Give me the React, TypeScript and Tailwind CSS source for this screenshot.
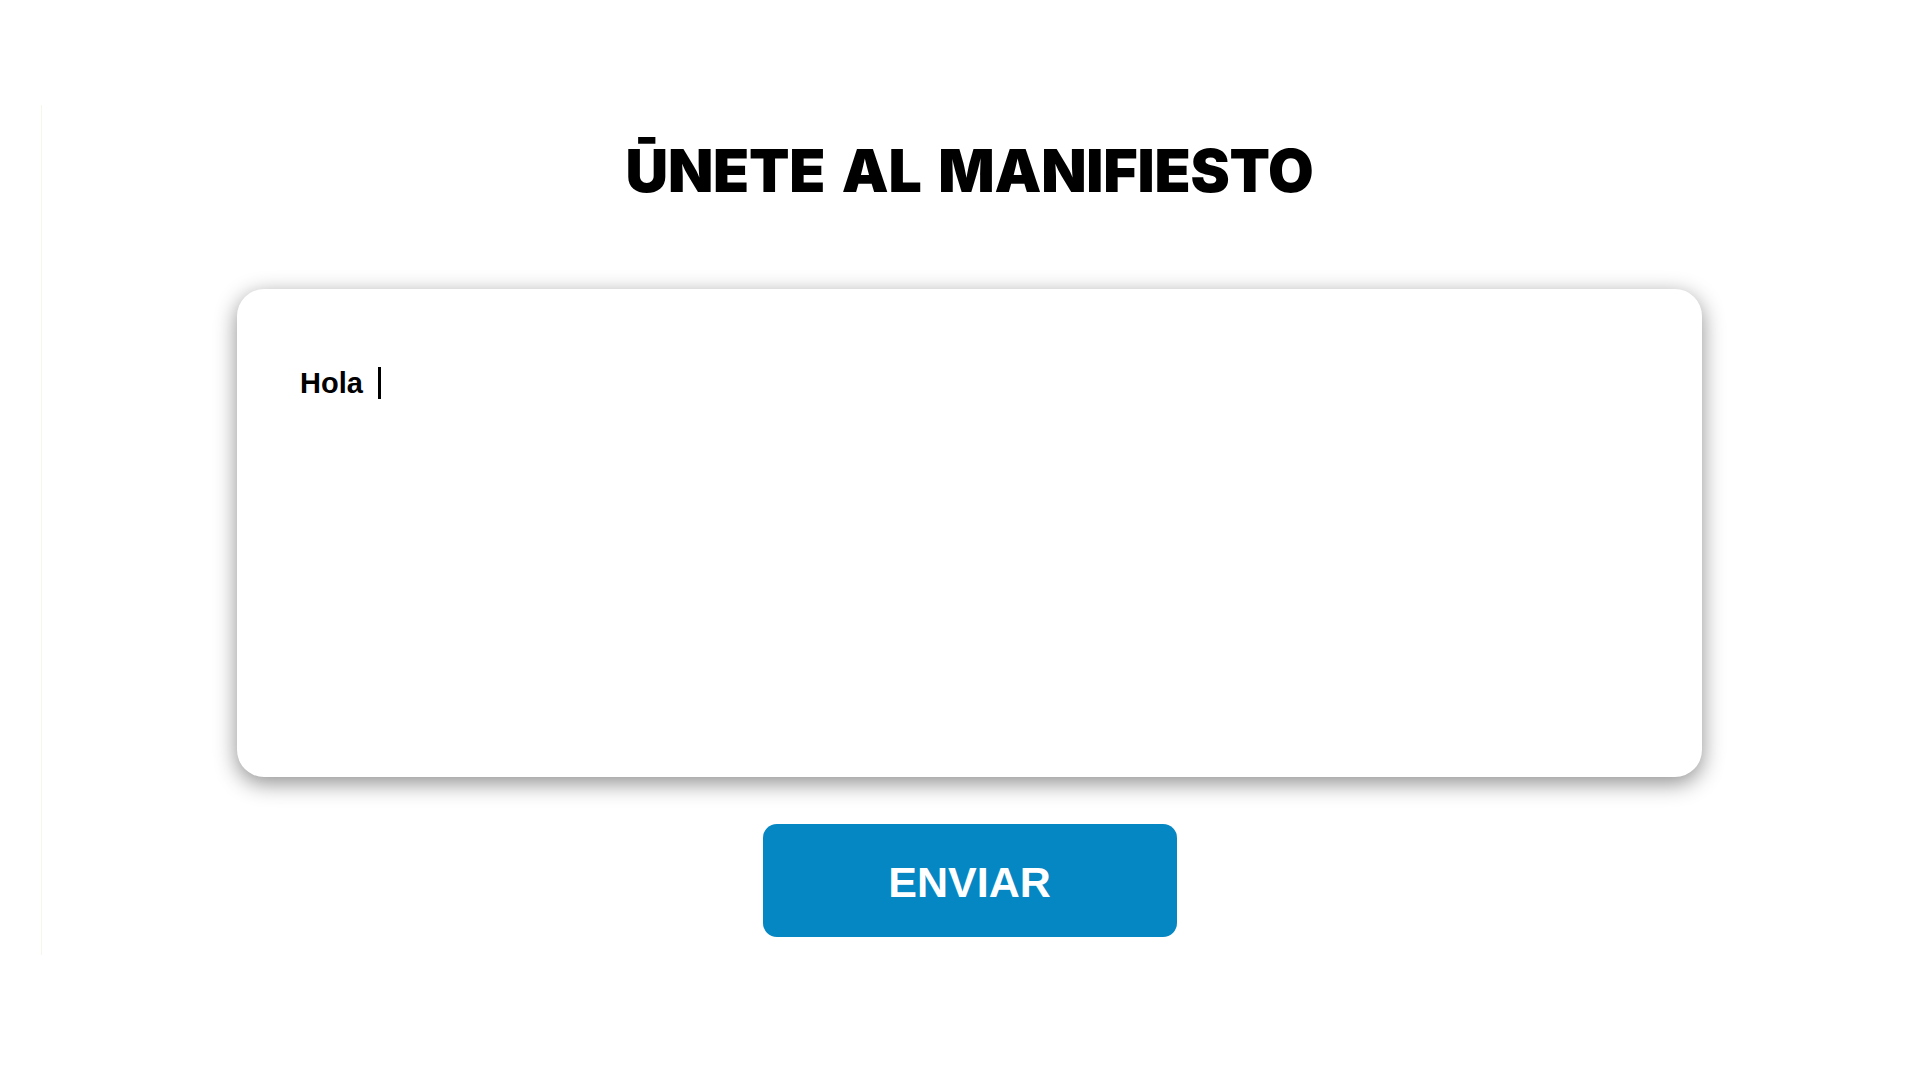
export default function App() {
  return (
    <div className="min-h-screen w-full bg-white pt-[105px]">
      {/* faint frame line on the left */}
      <div className="ml-[41px] w-[1856px] h-[850px] border-l border-[#f8f5ec] flex flex-col items-center">
        <h1 className="mt-[36px] text-[59px] leading-none font-black tracking-[-0.2px] [word-spacing:5px] text-black font-['Inter',sans-serif]">
          ŪNETE AL MANIFIESTO
        </h1>

        {/* message box */}
        <div className="mt-[89px] w-[1465px] h-[488px] rounded-[27px] bg-white pl-[63px] pt-[76px] shadow-[0_6px_22px_rgba(0,0,0,0.45)]">
          <p className="text-[29px] leading-[36px] font-bold text-black font-['Liberation_Sans',Arial,sans-serif] flex items-center">
            <span>Hola</span>
            <span className="inline-block ml-[15px] w-[3px] h-[32px] bg-black" />
          </p>
        </div>

        <button className="mt-[47px] w-[414px] h-[113px] rounded-[14px] bg-[#0587c3] flex items-center justify-center pt-[4px]">
          <span className="text-white text-[43px] font-bold font-['Liberation_Sans',Arial,sans-serif]">
            ENVIAR
          </span>
        </button>
      </div>
    </div>
  );
}
